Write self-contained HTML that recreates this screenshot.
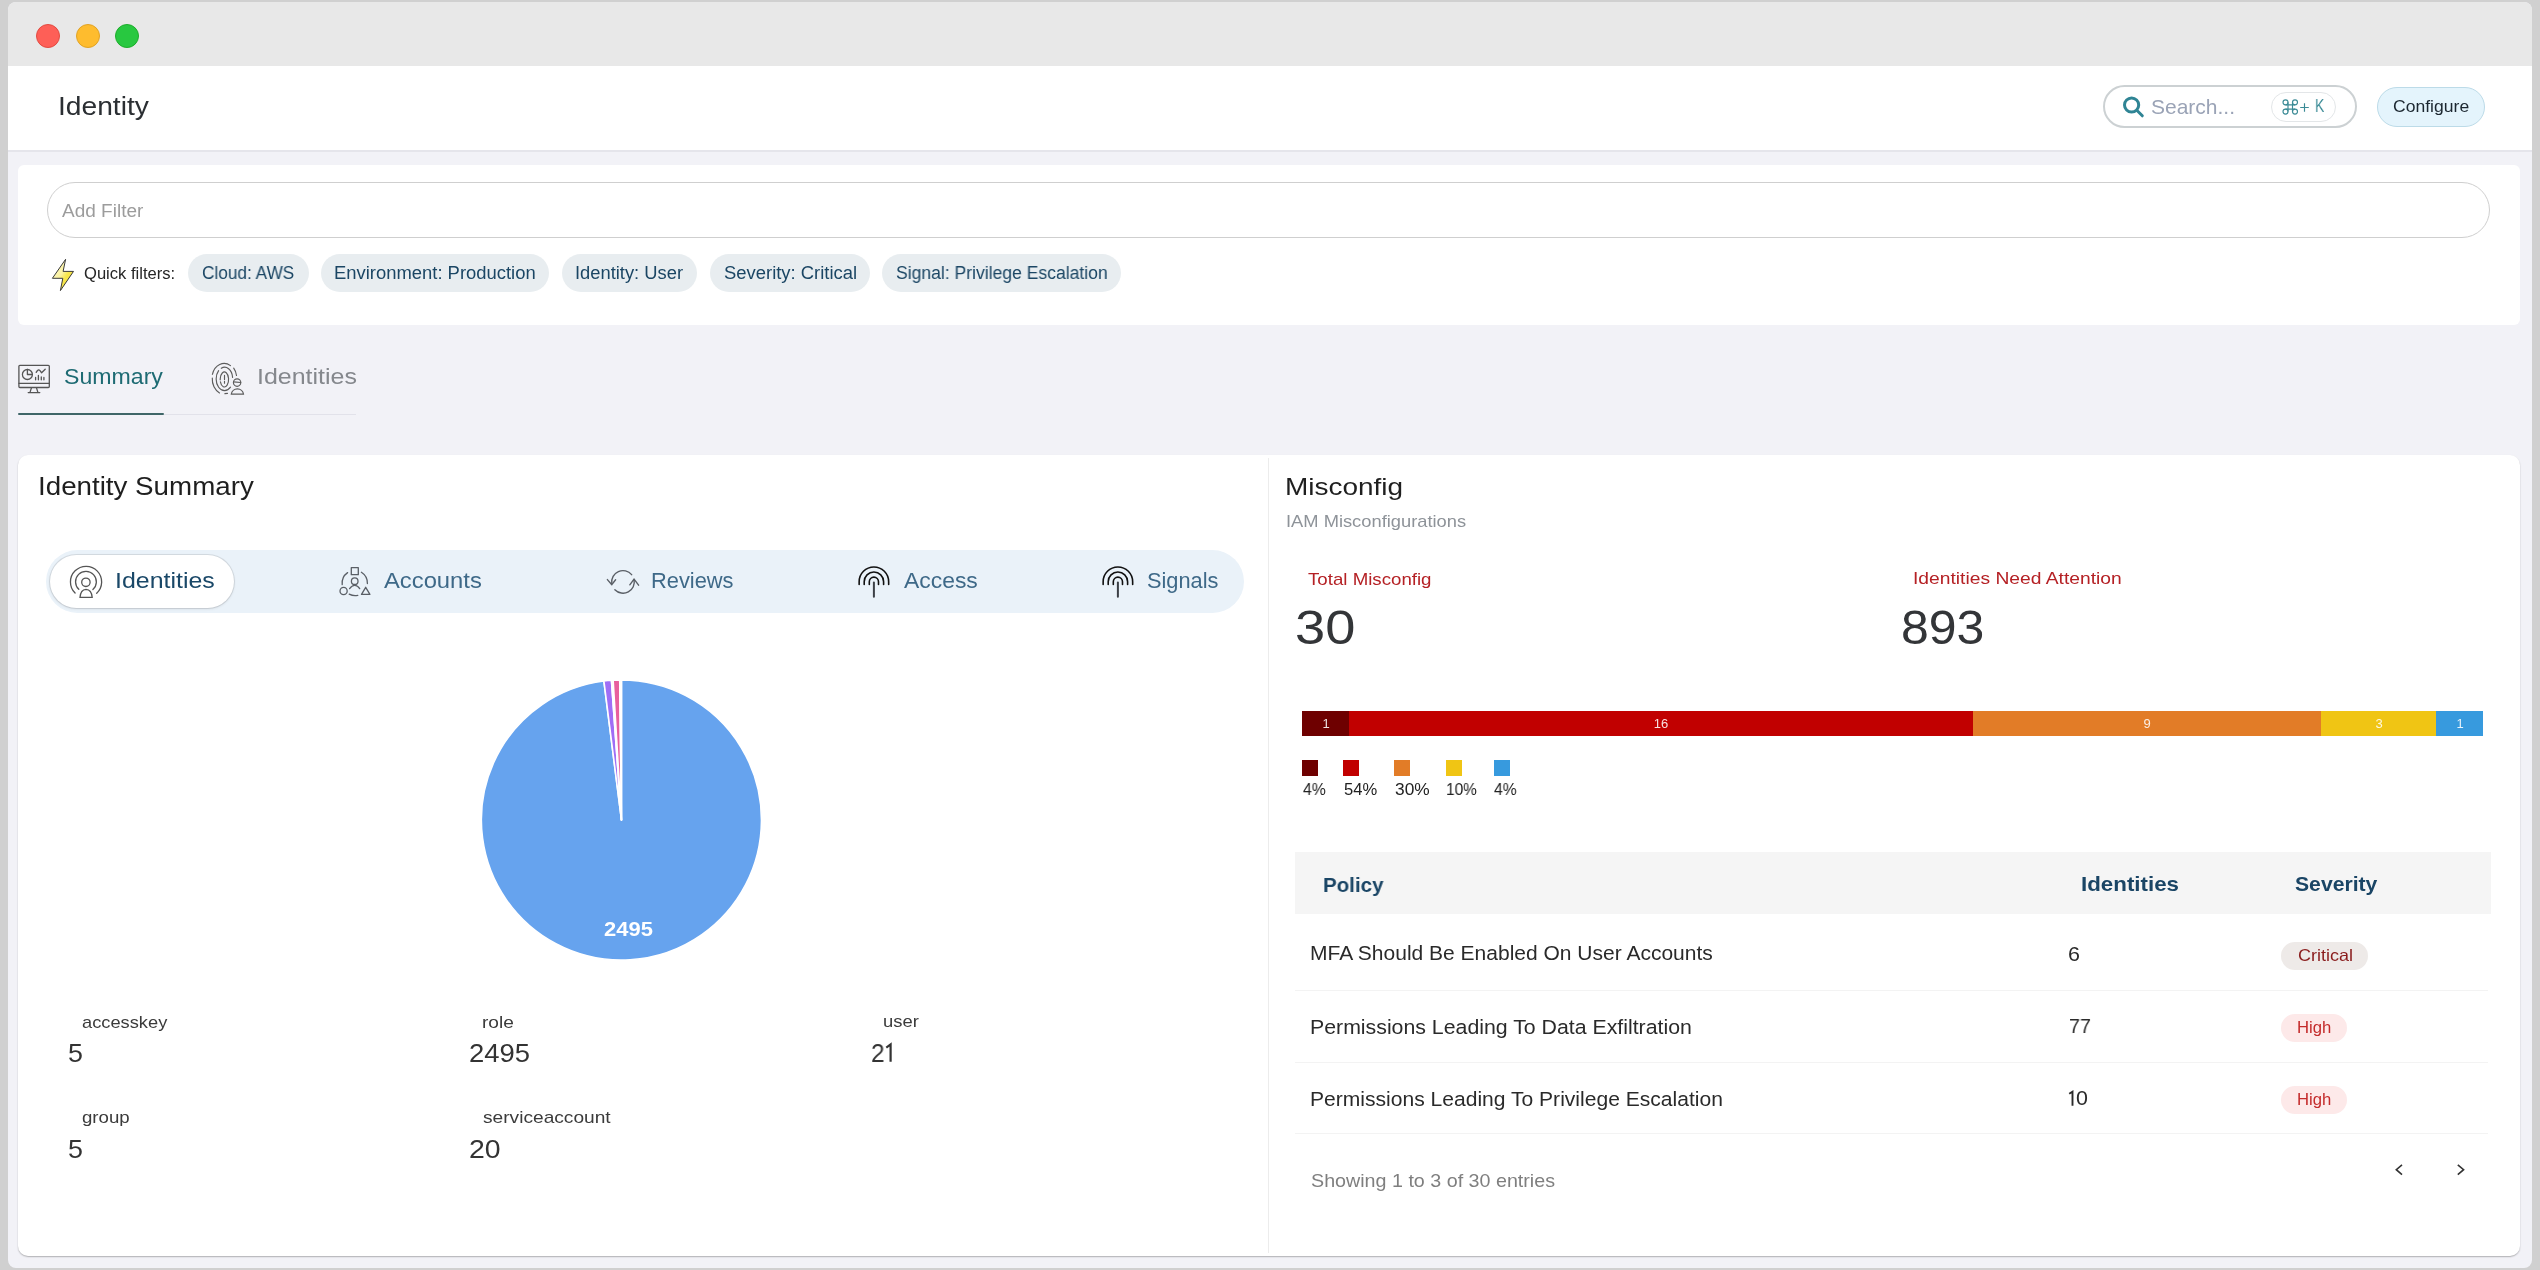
<!DOCTYPE html>
<html><head><meta charset="utf-8">
<style>
*{margin:0;padding:0;box-sizing:border-box}
html,body{width:2540px;height:1270px;overflow:hidden;background:#d0d0d0;font-family:"Liberation Sans", sans-serif}
.a{position:absolute}
.t{position:absolute;white-space:nowrap;line-height:1;transform-origin:0 0;-webkit-font-smoothing:antialiased;will-change:transform}
</style></head><body>
<div class="a" style="left:8px;top:2px;width:2524px;height:1266px;background:#f2f2f7;border-radius:8px;overflow:hidden">
  <div class="a" style="left:0;top:0;width:2524px;height:64px;background:#e8e8e8"></div>
  <div class="a" style="left:0;top:64px;width:2524px;height:84px;background:#ffffff"></div>
  <div class="a" style="left:0;top:148px;width:2524px;height:2px;background:#e5e5eb"></div>
</div>
<!-- traffic lights -->
<div class="a" style="left:36px;top:24px;width:24px;height:24px;border-radius:50%;background:#fe5f57;border:0.5px solid #e24b41"></div>
<div class="a" style="left:76px;top:24px;width:24px;height:24px;border-radius:50%;background:#febc2e;border:0.5px solid #e1a325"></div>
<div class="a" style="left:115px;top:24px;width:24px;height:24px;border-radius:50%;background:#28c840;border:0.5px solid #1dad2b"></div>
<!-- search -->
<div class="a" style="left:2103px;top:85px;width:254px;height:43px;border:2px solid #ccd1d3;border-radius:22px;background:#fff"></div>
<div class="a" style="left:2271px;top:92px;width:65px;height:30px;border:1px solid #e3e6e8;border-radius:15px;background:#fff"></div>
<div class="a" style="left:2377px;top:87px;width:108px;height:40px;border:1px solid #bcdbe8;border-radius:20px;background:#e4f4fc"></div>
<!-- filter card -->
<div class="a" style="left:18px;top:165px;width:2502px;height:160px;background:#fff;border-radius:6px"></div>
<div class="a" style="left:47px;top:182px;width:2443px;height:56px;border:1px solid #cfcfcf;border-radius:28px;background:#fff"></div>
<div class="a" style="left:188px;top:254px;width:121px;height:38px;border-radius:19px;background:#e8edf0"></div>
<div class="a" style="left:321px;top:254px;width:228px;height:38px;border-radius:19px;background:#e8edf0"></div>
<div class="a" style="left:562px;top:254px;width:135px;height:38px;border-radius:19px;background:#e8edf0"></div>
<div class="a" style="left:710px;top:254px;width:160px;height:38px;border-radius:19px;background:#e8edf0"></div>
<div class="a" style="left:882px;top:254px;width:239px;height:38px;border-radius:19px;background:#e8edf0"></div>
<!-- tabs underline -->
<div class="a" style="left:164px;top:414px;width:192px;height:1px;background:#e2e2ea"></div>
<div class="a" style="left:18px;top:413px;width:146px;height:2px;background:#3f6668;border-radius:1px"></div>
<!-- main card -->
<div class="a" style="left:18px;top:455px;width:2502px;height:801px;background:#fff;border-radius:10px;box-shadow:0 1px 1.5px rgba(0,0,0,0.28)"></div>
<div class="a" style="left:1268px;top:458px;width:1px;height:795px;background:#ececec"></div>
<!-- segmented control -->
<div class="a" style="left:46px;top:550px;width:1198px;height:63px;border-radius:32px;background:#eaf2f9"></div>
<div class="a" style="left:50px;top:555px;width:184px;height:53px;border-radius:27px;background:#fff;box-shadow:0 0 0 1px rgba(0,0,0,0.09),0 1px 3px rgba(0,0,0,0.10)"></div>
<!-- bar -->
<div class="a" style="left:1302px;top:711px;width:47px;height:25px;background:#6e0000"></div>
<div class="a" style="left:1349px;top:711px;width:624px;height:25px;background:#c10000"></div>
<div class="a" style="left:1973px;top:711px;width:348px;height:25px;background:#e27c27"></div>
<div class="a" style="left:2321px;top:711px;width:115px;height:25px;background:#f0c514"></div>
<div class="a" style="left:2436px;top:711px;width:47px;height:25px;background:#379ade"></div>
<!-- legend -->
<div class="a" style="left:1302px;top:760px;width:16px;height:16px;background:#6e0000"></div>
<div class="a" style="left:1343px;top:760px;width:16px;height:16px;background:#c10000"></div>
<div class="a" style="left:1394px;top:760px;width:16px;height:16px;background:#e27c27"></div>
<div class="a" style="left:1446px;top:760px;width:16px;height:16px;background:#f0c514"></div>
<div class="a" style="left:1494px;top:760px;width:16px;height:16px;background:#379ade"></div>
<!-- table -->
<div class="a" style="left:1295px;top:852px;width:1196px;height:62px;background:#f5f5f5"></div>
<div class="a" style="left:1295px;top:990px;width:1193px;height:1px;background:#f3f3f3"></div>
<div class="a" style="left:1295px;top:1062px;width:1193px;height:1px;background:#f3f3f3"></div>
<div class="a" style="left:1295px;top:1133px;width:1193px;height:1px;background:#f3f3f3"></div>
<div class="a" style="left:2281px;top:942px;width:87px;height:28px;border-radius:14px;background:#eeeae8"></div>
<div class="a" style="left:2281px;top:1014px;width:66px;height:28px;border-radius:14px;background:#fde9e9"></div>
<div class="a" style="left:2281px;top:1086px;width:66px;height:28px;border-radius:14px;background:#fde9e9"></div>

<svg class="a" style="left:0;top:0" width="2540" height="1270" viewBox="0 0 2540 1270">
<defs>
<linearGradient id="bolt" x1="0" y1="0" x2="1" y2="1">
<stop offset="0" stop-color="#fdfbd8"/><stop offset="0.45" stop-color="#fbf2a0"/><stop offset="0.6" stop-color="#f7e64a"/><stop offset="1" stop-color="#f3df4a"/>
</linearGradient>
</defs>
<!-- lightning -->
<polygon points="65.6,259.3 52.4,278.3 62.8,278.3 60.4,290.6 73.5,271.4 63.1,271.4" fill="url(#bolt)" stroke="#3a3a3a" stroke-width="1" stroke-linejoin="miter"/>
<!-- search -->
<g fill="none" stroke="#2f8494" stroke-width="3" stroke-linecap="round">
<circle cx="2131.6" cy="105" r="7.1"/>
<line x1="2137.3" y1="110.8" x2="2142.3" y2="115.8"/>
</g>
<!-- cmd symbol -->
<g fill="none" stroke="#3b8b96" stroke-width="1.15">
<path d="M2285.5 104.8 H2295 M2285.5 109.1 H2295 M2288 102.3 V111.6 M2292.5 102.3 V111.6"/>
<circle cx="2285.5" cy="102.3" r="2.5"/><circle cx="2295" cy="102.3" r="2.5"/>
<circle cx="2285.5" cy="111.6" r="2.5"/><circle cx="2295" cy="111.6" r="2.5"/>
<path d="M2300.2 107.5 H2308.8 M2304.5 103.2 V111.8"/>
</g>
<!-- summary monitor icon -->
<g fill="none" stroke="#555" stroke-width="1.3" stroke-linejoin="round" stroke-linecap="round">
<rect x="18.9" y="365.3" width="30.4" height="22.2" rx="1"/>
<line x1="18.9" y1="383.3" x2="49.3" y2="383.3"/>
<path d="M31.5 387.6 L30 392.4 M36.4 387.6 L37.9 392.4 M28.2 392.6 L39.8 392.6"/>
<circle cx="27.4" cy="374.5" r="5"/>
<path d="M27.4 369.5 V374.5 H32.4"/>
<path d="M36.2 372.4 Q38 368.6 40 370.6 L41.6 372.8 L45.2 369.2"/>
<path d="M35.6 379.8 V377.4 M38.4 379.8 V375.4 M41.3 379.8 V377 M43.9 379.8 V377.4"/>
</g>
<!-- identities (fingerprint + person) tab icon -->
<g fill="none" stroke="#5c5c5c" stroke-width="1.15" stroke-linecap="round">
<path d="M230.5 365.6 A12.2 15 0 0 0 212.4 374.3"/>
<path d="M212.3 378 A12.2 15 0 0 0 219.5 392.9"/>
<path d="M233.7 368.2 A12.2 15 0 0 1 236.5 375.5"/>
<path d="M224.9 393.6 L227.5 393.4"/>
<path d="M221.3 368.3 A8 11.2 0 0 1 232.6 377.4"/>
<path d="M218.6 370.6 A8 11.2 0 0 0 230.5 387.2"/>
<path d="M220.2 379.8 V379 A4.2 7.5 0 1 1 220.4 381.8"/>
<path d="M224.5 375.4 V379.6 M224.5 381.4 V383.2"/>
<circle cx="237.1" cy="382.6" r="3.7"/>
<path d="M233.6 381.9 L240.7 382.5"/>
<path d="M231.3 394.1 A6.15 6 0 0 1 243.5 394.1 Z"/>
</g>
<!-- segmented: identities -->
<g fill="none" stroke="#555" stroke-width="1.3" stroke-linecap="round">
<path d="M75.1 593 A15.6 15.6 0 1 1 96.7 593.3"/>
<path d="M78.8 589.3 A10.4 10.4 0 1 1 92.9 589.5"/>
<circle cx="85.9" cy="582.3" r="4.2"/>
<path d="M80 597.4 Q80.6 589.6 86 589.3 Q91.6 589.6 92.2 597.4 Z"/>
</g>
<!-- segmented: accounts -->
<g fill="none" stroke="#5a5f66" stroke-width="1.3" stroke-linecap="round" stroke-linejoin="round">
<rect x="351.3" y="567.7" width="7" height="7"/>
<circle cx="354.7" cy="581.2" r="3.3"/>
<path d="M349.6 588.6 Q352 585.2 354.7 585.3 Q357.5 585.2 359.7 588.6"/>
<circle cx="343.6" cy="591" r="3.6"/>
<path d="M361.5 594.4 L365.7 587.3 L369.9 594.4 Z"/>
<path d="M342.2 584.6 A13 13 0 0 1 347.6 572.6"/>
<path d="M361.4 572.3 A13 13 0 0 1 367.4 583.6"/>
<path d="M349.2 594.2 A13 13 0 0 0 357.8 595.4"/>
</g>
<!-- segmented: reviews -->
<g fill="none" stroke="#5a5f66" stroke-width="1.4" stroke-linecap="round" stroke-linejoin="round">
<path d="M611.81 583.47 A11.3 11.3 0 0 1 631.66 574.64"/>
<path d="M607.4 579.6 L611.81 584.67 L615.6 579.8"/>
<path d="M614.87 589.75 A11.3 11.3 0 0 0 634.05 579.55"/>
<path d="M629.8 584.8 L634.05 579.05 L638.6 585.2"/>
</g>
<!-- segmented: access -->
<g fill="none" stroke="#111" stroke-width="1.6" stroke-linecap="round">
<path d="M859.15 584.5 V581.7 A14.75 14.75 0 0 1 888.65 581.7 V584.5"/>
<path d="M864.20 584.5 V581.7 A9.7 9.7 0 0 1 883.60 581.7 V584.5"/>
<path d="M869.30 584.5 V581.7 A4.6 4.6 0 0 1 878.50 581.7 V584.5"/>
</g>
<line x1="873.9" y1="582.6" x2="873.9" y2="596.8" stroke="#3c4046" stroke-width="2" stroke-linecap="round"/>
<!-- segmented: signals -->
<g fill="none" stroke="#111" stroke-width="1.6" stroke-linecap="round">
<path d="M1103.15 584.5 V581.7 A14.75 14.75 0 0 1 1132.65 581.7 V584.5"/>
<path d="M1108.20 584.5 V581.7 A9.7 9.7 0 0 1 1127.60 581.7 V584.5"/>
<path d="M1113.30 584.5 V581.7 A4.6 4.6 0 0 1 1122.50 581.7 V584.5"/>
</g>
<line x1="1117.9" y1="582.6" x2="1117.9" y2="596.8" stroke="#3c4046" stroke-width="2" stroke-linecap="round"/>
<!-- digit ones without foot -->
<g fill="none" stroke="#333333" stroke-width="2.2" stroke-linecap="butt" stroke-linejoin="miter">
<path d="M886.3 1047.6 L890.6 1044.4 V1061.8"/>
</g>
<g fill="none" stroke="#2a2a2a" stroke-width="1.9" stroke-linecap="butt" stroke-linejoin="miter">
<path d="M2069.2 1093.8 L2072.5 1091.7 V1105.8"/>
</g>
<!-- chevrons -->
<g fill="none" stroke="#333" stroke-width="1.6" stroke-linecap="butt" stroke-linejoin="miter">
<path d="M2402 1164.8 L2396.3 1169.7 L2402 1174.6"/>
<path d="M2457.8 1164.8 L2463.6 1169.7 L2457.8 1174.6"/>
</g>
<!-- pie -->
<g transform="translate(621.45 820)">
<path d="M0 0 L0.00 -140.05 A140.05 140.05 0 1 1 -17.55 -138.95 Z" fill="#66a3ee" stroke="#fff" stroke-width="1.6" stroke-linejoin="round"/><path d="M0 0 L-17.55 -138.95 A140.05 140.05 0 0 1 -10.01 -139.69 Z" fill="#9f6ef6" stroke="#fff" stroke-width="1.6" stroke-linejoin="round"/><path d="M0 0 L-10.01 -139.69 A140.05 140.05 0 0 1 -8.31 -139.80 Z" fill="#ffd36b" stroke="#fff" stroke-width="1.6" stroke-linejoin="round"/><path d="M0 0 L-8.31 -139.80 A140.05 140.05 0 0 1 -1.71 -140.04 Z" fill="#e85f9e" stroke="#fff" stroke-width="1.6" stroke-linejoin="round"/><path d="M0 0 L-1.71 -140.04 A140.05 140.05 0 0 1 -0.00 -140.05 Z" fill="#fff3c4" stroke="#fff" stroke-width="1.6" stroke-linejoin="round"/>
</g>
</svg>

<div class="t" id="t0" style="left:57.5px;top:93.6px;font-size:25px;color:#2b2f33;transform:scaleX(1.1276);">Identity</div>
<div class="t" id="t1" style="left:2151.0px;top:96.2px;font-size:21px;color:#9aa3b6;transform:scaleX(0.9975);">Search...</div>
<div class="t" id="t2" style="left:2315.2px;top:97.0px;font-size:18.5px;color:#3b8b96;transform:scaleX(0.7583);">K</div>
<div class="t" id="t3" style="left:2393.0px;top:97.8px;font-size:16.5px;color:#1c2730;font-weight:500;transform:scaleX(1.0649);">Configure</div>
<div class="t" id="t4" style="left:62.1px;top:201.6px;font-size:18px;color:#9c9c9c;transform:scaleX(1.0554);">Add Filter</div>
<div class="t" id="t5" style="left:84.4px;top:264.8px;font-size:16.5px;color:#262626;transform:scaleX(1.0046);">Quick filters:</div>
<div class="t" id="t6" style="left:201.7px;top:264.0px;font-size:18px;color:#1b4664;transform:scaleX(0.9573);">Cloud: AWS</div>
<div class="t" id="t7" style="left:334.4px;top:264.0px;font-size:18px;color:#1b4664;transform:scaleX(1.0231);">Environment: Production</div>
<div class="t" id="t8" style="left:574.9px;top:264.0px;font-size:18px;color:#1b4664;transform:scaleX(1.0186);">Identity: User</div>
<div class="t" id="t9" style="left:723.8px;top:264.0px;font-size:18px;color:#1b4664;transform:scaleX(1.0238);">Severity: Critical</div>
<div class="t" id="t10" style="left:896.2px;top:264.0px;font-size:18px;color:#1b4664;transform:scaleX(0.9754);">Signal: Privilege Escalation</div>
<div class="t" id="t11" style="left:63.8px;top:366.9px;font-size:21.5px;color:#1e6b73;transform:scaleX(1.0755);">Summary</div>
<div class="t" id="t12" style="left:257.1px;top:366.9px;font-size:21.5px;color:#85888d;transform:scaleX(1.1613);">Identities</div>
<div class="t" id="t13" style="left:37.6px;top:474.2px;font-size:25px;color:#1f1f1f;transform:scaleX(1.1093);">Identity Summary</div>
<div class="t" id="t14" style="left:114.7px;top:570.9px;font-size:21.5px;color:#1a4868;transform:scaleX(1.1589);">Identities</div>
<div class="t" id="t15" style="left:384.0px;top:570.9px;font-size:21.5px;color:#3e6988;transform:scaleX(1.1062);">Accounts</div>
<div class="t" id="t16" style="left:651.2px;top:571.1px;font-size:21.5px;color:#3e6988;transform:scaleX(1.0152);">Reviews</div>
<div class="t" id="t17" style="left:903.7px;top:571.1px;font-size:21.5px;color:#3e6988;transform:scaleX(1.0650);">Access</div>
<div class="t" id="t18" style="left:1147.0px;top:571.1px;font-size:21.5px;color:#3e6988;transform:scaleX(1.0134);">Signals</div>
<div class="t" id="t19" style="left:604.0px;top:918.9px;font-size:20px;color:#ffffff;font-weight:700;transform:scaleX(1.0976);">2495</div>
<div class="t" id="t20" style="left:81.8px;top:1013.9px;font-size:17px;color:#3b3b3b;transform:scaleX(1.0743);">accesskey</div>
<div class="t" id="t21" style="left:68.4px;top:1041.0px;font-size:25.5px;color:#333333;transform:scaleX(1.0538);">5</div>
<div class="t" id="t22" style="left:481.9px;top:1013.9px;font-size:17px;color:#3b3b3b;transform:scaleX(1.1230);">role</div>
<div class="t" id="t23" style="left:469.3px;top:1041.0px;font-size:25.5px;color:#333333;transform:scaleX(1.0766);">2495</div>
<div class="t" id="t24" style="left:883.2px;top:1013.4px;font-size:17px;color:#3b3b3b;transform:scaleX(1.0830);">user</div>
<div class="t" id="t25" style="left:871.0px;top:1040.9px;font-size:25.5px;color:#333333;transform:scaleX(0.9583);">2</div>
<div class="t" id="t26" style="left:81.8px;top:1108.9px;font-size:17px;color:#3b3b3b;transform:scaleX(1.0970);">group</div>
<div class="t" id="t27" style="left:68.4px;top:1136.9px;font-size:25.5px;color:#333333;transform:scaleX(1.0538);">5</div>
<div class="t" id="t28" style="left:483.0px;top:1108.9px;font-size:17px;color:#3b3b3b;transform:scaleX(1.1261);">serviceaccount</div>
<div class="t" id="t29" style="left:469.3px;top:1136.9px;font-size:25.5px;color:#333333;transform:scaleX(1.1147);">20</div>
<div class="t" id="t30" style="left:1284.6px;top:475.3px;font-size:24.5px;color:#1f1f1f;transform:scaleX(1.1413);">Misconfig</div>
<div class="t" id="t31" style="left:1285.8px;top:512.6px;font-size:17px;color:#8e9399;transform:scaleX(1.0771);">IAM Misconfigurations</div>
<div class="t" id="t32" style="left:1307.7px;top:570.8px;font-size:17px;color:#b52125;transform:scaleX(1.0984);">Total Misconfig</div>
<div class="t" id="t33" style="left:1294.9px;top:602.9px;font-size:49px;color:#333538;transform:scaleX(1.1062);">30</div>
<div class="t" id="t34" style="left:1912.7px;top:570.2px;font-size:17px;color:#b52125;transform:scaleX(1.1323);">Identities Need Attention</div>
<div class="t" id="t35" style="left:1901.3px;top:602.9px;font-size:49px;color:#333538;transform:scaleX(1.0191);">893</div>
<div class="t" id="t36" style="left:1302.9px;top:780.8px;font-size:16.5px;color:#222222;transform:scaleX(0.9513);">4%</div>
<div class="t" id="t37" style="left:1343.5px;top:780.8px;font-size:16.5px;color:#222222;transform:scaleX(1.0044);">54%</div>
<div class="t" id="t38" style="left:1394.7px;top:780.8px;font-size:16.5px;color:#222222;transform:scaleX(1.0494);">30%</div>
<div class="t" id="t39" style="left:1445.8px;top:780.8px;font-size:16.5px;color:#222222;transform:scaleX(0.9365);">10%</div>
<div class="t" id="t40" style="left:1494.3px;top:780.8px;font-size:16.5px;color:#222222;transform:scaleX(0.9472);">4%</div>
<div class="t" id="t41" style="left:1322.9px;top:873.5px;font-size:21px;color:#1a4565;font-weight:700;transform:scaleX(0.9774);">Policy</div>
<div class="t" id="t42" style="left:2080.9px;top:873.0px;font-size:21px;color:#1a4565;font-weight:700;transform:scaleX(1.0629);">Identities</div>
<div class="t" id="t43" style="left:2294.7px;top:873.0px;font-size:21px;color:#1a4565;font-weight:700;transform:scaleX(1.0080);">Severity</div>
<div class="t" id="t44" style="left:1310.2px;top:943.4px;font-size:20.5px;color:#2a2a2a;transform:scaleX(1.0245);">MFA Should Be Enabled On User Accounts</div>
<div class="t" id="t45" style="left:1310.2px;top:1016.6px;font-size:20.5px;color:#2a2a2a;transform:scaleX(1.0386);">Permissions Leading To Data Exfiltration</div>
<div class="t" id="t46" style="left:1310.2px;top:1088.6px;font-size:20.5px;color:#2a2a2a;transform:scaleX(1.0274);">Permissions Leading To Privilege Escalation</div>
<div class="t" id="t47" style="left:2068.4px;top:943.6px;font-size:20.5px;color:#2a2a2a;transform:scaleX(1.0500);">6</div>
<div class="t" id="t48" style="left:2068.5px;top:1016.3px;font-size:20.5px;color:#2a2a2a;transform:scaleX(0.9579);">77</div>
<div class="t" id="t49" style="left:2076.4px;top:1088.4px;font-size:20.5px;color:#2a2a2a;transform:scaleX(1.0455);">0</div>
<div class="t" id="t50" style="left:2297.5px;top:947.0px;font-size:16.5px;color:#8a1c1c;transform:scaleX(1.0914);">Critical</div>
<div class="t" id="t51" style="left:2296.5px;top:1019.2px;font-size:16.5px;color:#c42b2b;transform:scaleX(1.0104);">High</div>
<div class="t" id="t52" style="left:2296.5px;top:1091.2px;font-size:16.5px;color:#c42b2b;transform:scaleX(1.0104);">High</div>
<div class="t" id="t53" style="left:1311.0px;top:1170.9px;font-size:19px;color:#7f7f7f;transform:scaleX(1.0360);">Showing 1 to 3 of 30 entries</div>
<div class="t" id="t54" style="left:1275.5px;width:100px;text-align:center;top:717.0px;font-size:13px;color:rgba(255,255,255,0.88);">1</div>
<div class="t" id="t55" style="left:1611.0px;width:100px;text-align:center;top:717.0px;font-size:13px;color:rgba(255,255,255,0.88);">16</div>
<div class="t" id="t56" style="left:2097.0px;width:100px;text-align:center;top:717.0px;font-size:13px;color:rgba(255,255,255,0.88);">9</div>
<div class="t" id="t57" style="left:2328.5px;width:100px;text-align:center;top:717.0px;font-size:13px;color:rgba(255,255,255,0.88);">3</div>
<div class="t" id="t58" style="left:2409.5px;width:100px;text-align:center;top:717.0px;font-size:13px;color:rgba(255,255,255,0.88);">1</div>
</body></html>
